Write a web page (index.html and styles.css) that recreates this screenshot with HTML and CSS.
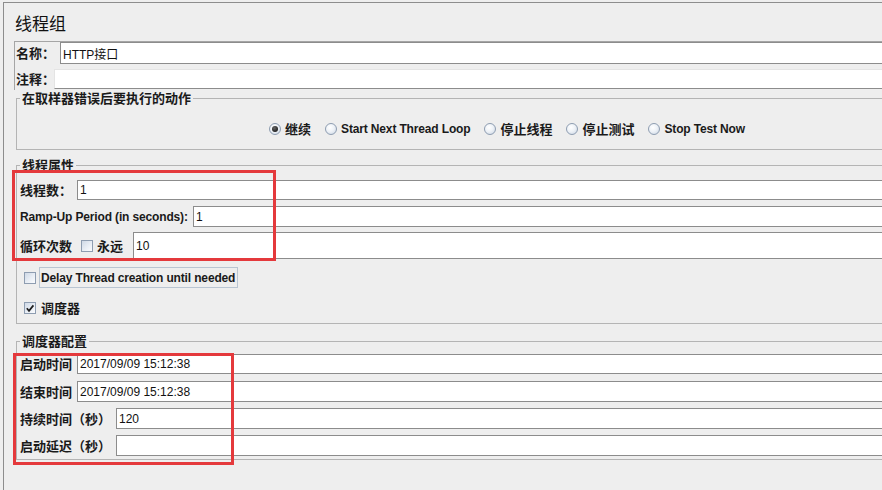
FILE: index.html
```html
<!DOCTYPE html>
<html lang="zh-CN">
<head>
<meta charset="utf-8">
<title>线程组</title>
<link rel="stylesheet" href="styles.css">
</head>
<body>
<div class="page">
  <div class="window">
    <div class="title">线程组</div>
    <div class="namebox">
      <div class="row r-name"><span class="lbl w-name">名称：</span><div class="field">HTTP接口</div></div>
      <div class="row r-comment"><span class="lbl w-comment">注释：</span><div class="field"></div></div>
    </div>

    <fieldset class="group g-action">
      <legend>在取样器错误后要执行的动作</legend>
      <div class="radios">
        <span class="opt"><span class="rd on"></span><span class="cjk">继续</span></span>
        <span class="opt"><span class="rd"></span><span class="lat">Start Next Thread Loop</span></span>
        <span class="opt"><span class="rd"></span><span class="cjk">停止线程</span></span>
        <span class="opt"><span class="rd"></span><span class="cjk">停止测试</span></span>
        <span class="opt"><span class="rd"></span><span class="lat">Stop Test Now</span></span>
      </div>
    </fieldset>

    <fieldset class="group g-thread">
      <legend>线程属性</legend>
      <div class="row r-threads"><span class="lbl w-57">线程数：</span><div class="field">1</div></div>
      <div class="row r-ramp"><span class="lbl lat w-ramp">Ramp-Up Period (in seconds):</span><div class="field">1</div></div>
      <div class="row r-loop">
        <span class="lbl">循环次数</span>
        <span class="cb loop-cb"></span>
        <span class="lbl forever">永远</span>
        <div class="field loop-field">10</div>
      </div>
      <div class="row r-delay"><span class="cb delay-cb"></span><span class="focus lat">Delay Thread creation until needed</span></div>
      <div class="row r-sched">
        <span class="cb sched-cb"><svg viewBox="0 0 10 10" width="10" height="10"><path d="M1.8 5.2 L4 7.8 L8.4 2.4" fill="none" stroke="#1e1e1e" stroke-width="1.7"/></svg></span>
        <span class="lbl sched-lbl">调度器</span>
      </div>
    </fieldset>

    <fieldset class="group g-sched">
      <legend>调度器配置</legend>
      <div class="row r-s1"><span class="lbl w-57">启动时间</span><div class="field">2017/09/09 15:12:38</div></div>
      <div class="row r-s2"><span class="lbl w-57">结束时间</span><div class="field">2017/09/09 15:12:38</div></div>
      <div class="row r-s3"><span class="lbl w-96">持续时间（秒）</span><div class="field">120</div></div>
      <div class="row r-s4"><span class="lbl w-96">启动延迟（秒）</span><div class="field"></div></div>
    </fieldset>
  </div>
  <div class="mark m1"></div>
  <div class="mark m2"></div>
</div>
</body>
</html>
```
FILE: styles.css
```css
html, body {
  margin: 0;
  padding: 0;
}
body {
  background: #eeeeee;
  width: 882px;
  height: 490px;
  overflow: hidden;
  font-family: "Liberation Sans", "Noto Sans CJK SC", sans-serif;
  color: #000;
}
.page {
  position: relative;
  width: 882px;
  height: 490px;
  overflow: hidden;
}
.window {
  margin: 2px 0 0 3px;
  border-top: 1px solid #8d8d8d;
  border-left: 1px solid #8d8d8d;
  width: 983px;
  height: 487px;
  padding-left: 10px;
}
.title {
  font-family: "Noto Sans CJK SC", sans-serif;
  font-size: 17px;
  line-height: 20px;
  height: 28px;
  padding-top: 10px;
  padding-left: 1px;
  color: #111;
}
.namebox {
  border-top: 1px solid #a5a5a5;
  border-left: 1px solid #a5a5a5;
  padding: 0 0 1px 1px;
}
.row {
  display: flex;
  align-items: center;
}
.lbl {
  flex: none;
  font-family: "Noto Sans CJK SC", sans-serif;
  font-size: 13px;
  font-weight: bold;
  line-height: 16px;
  white-space: nowrap;
  color: #1a1a1a;
}
.lbl.lat, .lat {
  font-family: "Liberation Sans", "Noto Sans CJK SC", sans-serif;
  font-size: 12px;
  font-weight: bold;
  letter-spacing: -0.15px;
  white-space: nowrap;
  color: #1a1a1a;
}
.cjk {
  font-family: "Noto Sans CJK SC", sans-serif;
  font-size: 13px;
  font-weight: bold;
  line-height: 16px;
  color: #1a1a1a;
}
.field {
  flex: 1;
  align-self: stretch;
  box-sizing: border-box;
  border: 1px solid #8c8c8c;
  background: #ffffff;
  font-family: "Liberation Sans", "Noto Sans CJK SC", sans-serif;
  font-size: 12px;
  display: flex;
  align-items: center;
  padding-left: 2px;
  color: #111;
}
.r-name { height: 22px; }
.r-comment { height: 20px; margin-top: 5px; }
.w-name { width: 44px; }
.w-comment { width: 38px; }
.r-comment .field { border-color: #e4e4e4 #e4e4e4 #8c8c8c #e4e4e4; }

.group {
  margin: 0 0 0 2px;
  border: 1px solid #b4b4b4;
  padding: 0 0 0 3px;
  min-width: 0;
}
.group legend {
  font-family: "Noto Sans CJK SC", sans-serif;
  font-size: 13px;
  font-weight: bold;
  line-height: 16px;
  padding: 0 2px;
  color: #1a1a1a;
}
.g-action {
  padding-top: 15px;
  padding-bottom: 12px;
}
.radios {
  display: flex;
  justify-content: center;
  align-items: center;
  gap: 14px;
  height: 16px;
  padding-right: 2px;
}
.opt {
  display: flex;
  align-items: center;
  gap: 4px;
}
.rd {
  width: 12px;
  height: 12px;
  box-sizing: border-box;
  border-radius: 50%;
  border: 1px solid #8e9db1;
  background: radial-gradient(circle at 40% 35%, #ffffff 0%, #eef2f7 45%, #c9d4e2 100%);
  position: relative;
}
.rd.on::after {
  content: "";
  position: absolute;
  left: 2px;
  top: 2px;
  width: 6px;
  height: 6px;
  border-radius: 50%;
  background: radial-gradient(circle at 40% 35%, #666 0%, #222 70%);
}

.g-thread {
  margin-top: 7px;
  padding-top: 7px;
  padding-bottom: 7px;
}
.r-threads { height: 20px; }
.r-ramp { height: 21px; margin-top: 6px; }
.r-loop { height: 27px; margin-top: 5px; }
.r-delay { height: 21px; margin-top: 8px; }
.r-sched { height: 16px; margin-top: 12px; }
.w-57 { width: 57px; }
.w-96 { width: 96px; }
.w-ramp { width: 173px; }
.cb {
  flex: none;
  width: 12px;
  height: 12px;
  box-sizing: border-box;
  border: 1px solid #8e9db1;
  background: linear-gradient(135deg, #cfd9e6 0%, #e9eef5 55%, #fbfcfe 100%);
  display: flex;
  align-items: center;
  justify-content: center;
}
.loop-cb { margin-left: 9px; }
.forever { margin-left: 4px; }
.loop-field { margin-left: 10px; }
.delay-cb { margin-left: 4px; }
.focus {
  margin-left: 3px;
  height: 21px;
  box-sizing: border-box;
  border: 1px solid #b9c5d2;
  padding: 0 2px 0 1px;
  display: flex;
  align-items: center;
}
.sched-cb { margin-left: 4px; }
.sched-lbl { margin-left: 5px; }

.g-sched {
  margin-top: 9px;
  padding-top: 5px;
  padding-bottom: 3px;
}
.r-s1 { height: 20px; }
.r-s2 { height: 21px; margin-top: 7px; }
.r-s3 { height: 21px; margin-top: 6px; }
.r-s4 { height: 21px; margin-top: 6px; }

.mark {
  position: absolute;
  box-sizing: border-box;
  border: 3px solid #e4393c;
}
.m1 {
  left: 12px;
  top: 170px;
  width: 264px;
  height: 91px;
}
.m2 {
  left: 13px;
  top: 353px;
  width: 221px;
  height: 112px;
}
```
